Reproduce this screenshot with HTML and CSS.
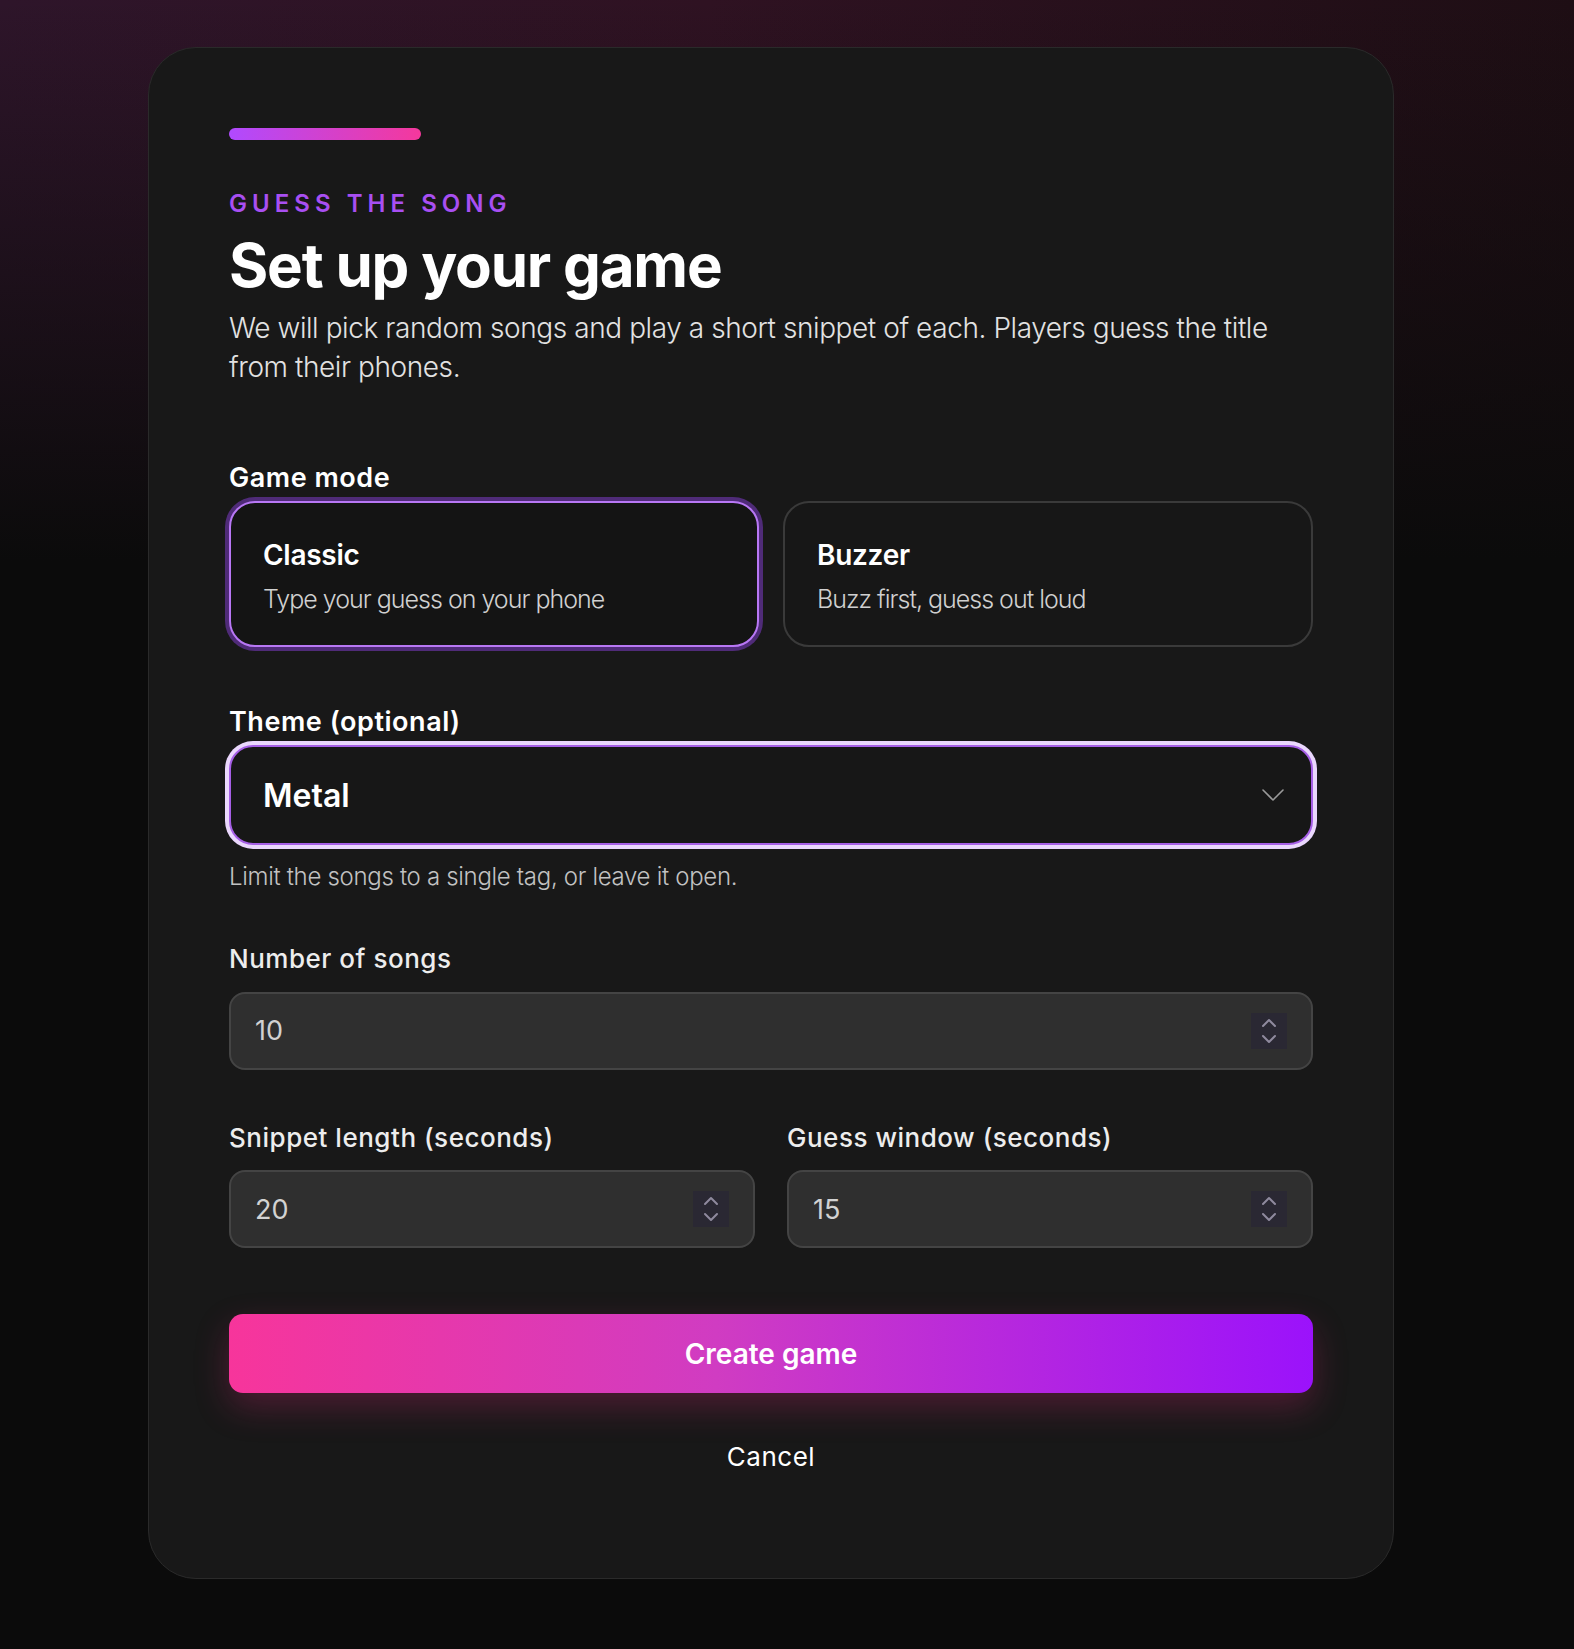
FILE: index.html
```html
<!DOCTYPE html>
<html lang="en">
<head>
    <meta charset="UTF-8">
    <meta name="viewport" content="width=device-width, initial-scale=1.0">
    <title>Guess the Song - Set up your game</title>
    <link rel="stylesheet" href="styles.css">
</head>
<body>
    <div class="page">
        <div class="setup-card">
            <div class="accent-bar"></div>
            <div class="eyebrow">GUESS THE SONG</div>
            <h1 class="setup-title">Set up your game</h1>
            <p class="setup-intro">We will pick random songs and play a short snippet of each. Players guess the title from their phones.</p>

            <div class="section section-mode">
                <div class="field-label strong">Game mode</div>
                <div class="mode-grid">
                    <button class="mode-option selected">
                        <span class="mode-title">Classic</span>
                        <span class="mode-text">Type your guess on your phone</span>
                    </button>
                    <button class="mode-option">
                        <span class="mode-title">Buzzer</span>
                        <span class="mode-text">Buzz first, guess out loud</span>
                    </button>
                </div>
            </div>

            <div class="section section-theme">
                <div class="field-label strong">Theme (optional)</div>
                <div class="select-wrap">
                    <select class="theme-select">
                        <option>Metal</option>
                        <option>Rock</option>
                        <option>Pop</option>
                        <option>Any</option>
                    </select>
                    <svg class="chevron" width="22" height="12" viewBox="0 0 22 12" fill="none">
                        <path d="M1 1l10 10 10-10" stroke="#9a9a9a" stroke-width="1.6" stroke-linecap="round" stroke-linejoin="round"/>
                    </svg>
                </div>
                <div class="field-help">Limit the songs to a single tag, or leave it open.</div>
            </div>

            <div class="section section-count">
                <div class="field-label">Number of songs</div>
                <div class="number-field">
                    <input type="text" value="10">
                    <span class="spin">
                        <svg width="16" height="26" viewBox="0 0 16 26" fill="none">
                            <path d="M2 8l6-6 6 6M2 18l6 6 6-6" stroke="#8f8a9e" stroke-width="2" stroke-linecap="round" stroke-linejoin="round"/>
                        </svg>
                    </span>
                </div>
            </div>

            <div class="section section-timing">
                <div class="timing-grid">
                    <div>
                        <div class="field-label">Snippet length (seconds)</div>
                        <div class="number-field">
                            <input type="text" value="20">
                            <span class="spin">
                                <svg width="16" height="26" viewBox="0 0 16 26" fill="none">
                                    <path d="M2 8l6-6 6 6M2 18l6 6 6-6" stroke="#8f8a9e" stroke-width="2" stroke-linecap="round" stroke-linejoin="round"/>
                                </svg>
                            </span>
                        </div>
                    </div>
                    <div>
                        <div class="field-label">Guess window (seconds)</div>
                        <div class="number-field">
                            <input type="text" value="15">
                            <span class="spin">
                                <svg width="16" height="26" viewBox="0 0 16 26" fill="none">
                                    <path d="M2 8l6-6 6 6M2 18l6 6 6-6" stroke="#8f8a9e" stroke-width="2" stroke-linecap="round" stroke-linejoin="round"/>
                                </svg>
                            </span>
                        </div>
                    </div>
                </div>
            </div>

            <button class="create-button">Create game</button>
            <div class="cancel-row">
                <button class="cancel-button">Cancel</button>
            </div>
        </div>
    </div>

    <script>
        document.querySelectorAll('.mode-option').forEach(option => {
            option.addEventListener('click', () => {
                document.querySelectorAll('.mode-option').forEach(o => o.classList.remove('selected'));
                option.classList.add('selected');
            });
        });

        document.querySelectorAll('.number-field').forEach(field => {
            const input = field.querySelector('input');
            field.querySelector('.spin').addEventListener('click', (e) => {
                const rect = e.currentTarget.getBoundingClientRect();
                const up = e.clientY < rect.top + rect.height / 2;
                let value = parseInt(input.value, 10) || 0;
                input.value = up ? value + 1 : Math.max(1, value - 1);
            });
        });
    </script>
</body>
</html>
```

FILE: styles.css
```css
* {
    box-sizing: border-box;
}

body {
    margin: 0;
    font-family: 'Inter', 'Liberation Sans', sans-serif;
    color: #f2f2f2;
    background:
        linear-gradient(to bottom, rgba(11, 11, 11, 0) 0%, #0b0b0b 34%),
        linear-gradient(to right, #2e152a, #2f1222 45%, #1e0e14);
    background-color: #0b0b0b;
    min-height: 1649px;
}

.page {
    padding: 47px 0 71px 148px;
}

.setup-card {
    width: 1246px;
    background: #181818;
    border: 1px solid #2a2a2a;
    border-radius: 48px;
    padding: 80px 80px 92px;
}

.accent-bar {
    width: 192px;
    height: 12px;
    border-radius: 6px;
    background: linear-gradient(90deg, #b04aff, #f5389c);
}

.eyebrow {
    margin-top: 50px;
    font-size: 24px;
    line-height: 1.2;
    font-weight: 600;
    letter-spacing: 0.21em;
    color: #a84ff2;
}

.setup-title {
    margin: 13px 0 0;
    font-size: 60px;
    line-height: 1.1;
    font-weight: 700;
    letter-spacing: -0.02em;
    color: #fff;
}

.setup-intro {
    margin: 11px 0 0;
    font-size: 28px;
    line-height: 39.5px;
    font-weight: 300;
    letter-spacing: -0.015em;
    color: #e2e2e2;
}

.field-label {
    font-size: 26px;
    line-height: 1.3;
    font-weight: 500;
    letter-spacing: 0.02em;
    color: #ededed;
}

.field-label.strong {
    font-size: 27px;
    line-height: 33.8px;
    font-weight: 600;
    color: #fff;
    margin-bottom: 6px;
}

.section-mode {
    margin-top: 73px;
}

.mode-grid {
    display: grid;
    grid-template-columns: 1fr 1fr;
    gap: 24px;
}

.mode-option {
    display: flex;
    flex-direction: column;
    gap: 8px;
    text-align: left;
    padding: 34px 32px 28px;
    background: #171717;
    border: 2px solid #3a3a3a;
    border-radius: 26px;
    font-family: inherit;
    cursor: pointer;
}

.mode-option.selected {
    background: #141414;
    border-color: #b877f5;
    box-shadow: 0 0 0 4px #4f2b78;
}

.mode-title {
    font-size: 28px;
    line-height: 36.4px;
    font-weight: 600;
    letter-spacing: -0.01em;
    color: #fff;
}

.mode-text {
    font-size: 25px;
    line-height: 36.4px;
    font-weight: 300;
    letter-spacing: -0.04em;
    color: #d0d0d0;
}

.section-theme {
    margin-top: 58px;
}

.select-wrap {
    display: flex;
    align-items: center;
    height: 100px;
    padding: 0 27px 0 32px;
    border: 2px solid #a65fe6;
    border-radius: 24px;
    background: #171717;
    box-shadow: 0 0 0 4px #ead7fd;
}

.theme-select {
    flex: 1;
    appearance: none;
    -webkit-appearance: none;
    background: transparent;
    border: none;
    outline: none;
    padding: 0;
    font-family: inherit;
    font-size: 32px;
    font-weight: 600;
    color: #fff;
    cursor: pointer;
}

.theme-select option {
    background: #181818;
    font-size: 20px;
}

.chevron {
    flex-shrink: 0;
    pointer-events: none;
}

.field-help {
    margin-top: 15px;
    font-size: 24px;
    line-height: 1.4;
    font-weight: 300;
    letter-spacing: -0.013em;
    color: #c2c2c2;
}

.section-count {
    margin-top: 48px;
}

.section-count .field-label,
.timing-grid .field-label {
    margin-bottom: 16px;
}

.number-field {
    display: flex;
    align-items: center;
    height: 78px;
    padding: 0 24px;
    background: #2f2f2f;
    border: 2px solid #444;
    border-radius: 16px;
}

.number-field input {
    flex: 1;
    min-width: 0;
    background: transparent;
    border: none;
    outline: none;
    padding: 0;
    font-family: inherit;
    font-size: 27px;
    font-weight: 400;
    color: #d2d2d2;
}

.spin {
    display: flex;
    align-items: center;
    justify-content: center;
    width: 36px;
    height: 36px;
    background: #2a2833;
    cursor: pointer;
}

.section-timing {
    margin-top: 51px;
}

.timing-grid {
    display: grid;
    grid-template-columns: 1fr 1fr;
    gap: 32px;
}

.create-button {
    display: block;
    width: 100%;
    height: 79px;
    margin-top: 66px;
    border: none;
    border-radius: 14px;
    background: linear-gradient(90deg, #f7359b, #d03cc2 45%, #9b12fb);
    box-shadow: 0 14px 34px rgba(214, 40, 120, 0.28);
    font-family: inherit;
    font-size: 28px;
    font-weight: 600;
    color: #fff;
    cursor: pointer;
}

.cancel-row {
    display: flex;
    justify-content: center;
    margin-top: 35px;
}

.cancel-button {
    padding: 12px 24px;
    background: none;
    border: none;
    font-family: inherit;
    font-size: 26px;
    line-height: 1.3;
    font-weight: 400;
    letter-spacing: 0.02em;
    color: #fff;
    cursor: pointer;
}
```
